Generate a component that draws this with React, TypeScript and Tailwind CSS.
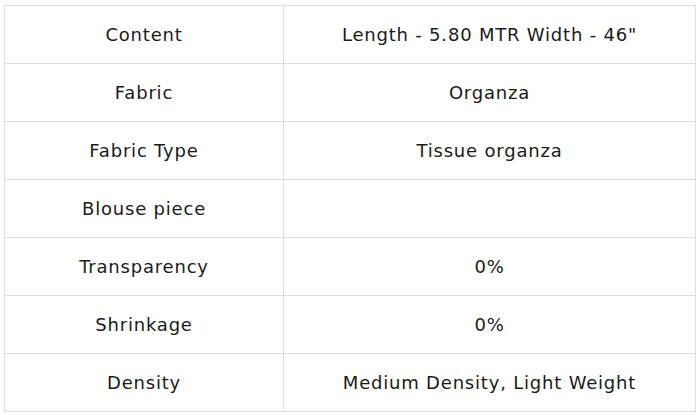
const rows: [string, string][] = [
  ["Content", 'Length - 5.80 MTR Width - 46"'],
  ["Fabric", "Organza"],
  ["Fabric Type", "Tissue organza"],
  ["Blouse piece", ""],
  ["Transparency", "0%"],
  ["Shrinkage", "0%"],
  ["Density", "Medium Density, Light Weight"],
];

export default function App() {
  return (
    <div className="w-[700px] h-[415px] bg-white pt-[5px] pl-[4px]">
      <table
        className="w-[692px] border-collapse text-[18px] tracking-[0.8px] text-[#1a1a1a]"
        style={{ fontFamily: '"DejaVu Sans", sans-serif' }}
      >
        <tbody>
          {rows.map(([label, value]) => (
            <tr key={label} className="h-[58px]">
              <td className="w-[279px] border border-[#dddddd] text-center align-middle">
                {label}
              </td>
              <td className="border border-[#dddddd] text-center align-middle">
                {value}
              </td>
            </tr>
          ))}
        </tbody>
      </table>
    </div>
  );
}
